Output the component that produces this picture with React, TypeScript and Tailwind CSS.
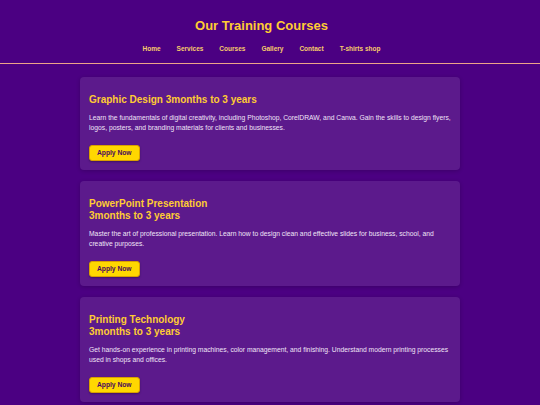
const courses = [
  {
    title: ["Graphic Design 3months to 3 years"],
    text: "Learn the fundamentals of digital creativity, including Photoshop, CorelDRAW, and Canva. Gain the skills to design flyers, logos, posters, and branding materials for clients and businesses.",
  },
  {
    title: ["PowerPoint Presentation", "3months to 3 years"],
    text: "Master the art of professional presentation. Learn how to design clean and effective slides for business, school, and creative purposes.",
  },
  {
    title: ["Printing Technology", "3months to 3 years"],
    text: "Get hands-on experience in printing machines, color management, and finishing. Understand modern printing processes used in shops and offices.",
  },
];

const links = ["Home", "Services", "Courses", "Gallery", "Contact", "T-shirts shop"];

export default function App() {
  return (
    <div className="min-h-[405px] bg-[#4b0082] font-['Liberation_Sans',Arial,sans-serif]">
      {/* header */}
      <header className="border-b border-[#eea488] pt-[17px] pb-[9px] pr-[17px] text-center">
        <h1 className="text-[13px] font-bold leading-[18px] text-[#ffcc33]">Our Training Courses</h1>
        <nav className="mt-[9px] flex justify-center gap-[16px] text-[6.5px] font-bold leading-[10px] text-[#f7cc6a]">
          {links.map((l) => (
            <span key={l}>{l}</span>
          ))}
        </nav>
      </header>

      <main className="mx-auto mt-[13px] flex w-[380px] flex-col gap-[11px]">
        {courses.map((c, i) => (
          <div key={i} className="rounded-[4px] bg-[#5c1a8c] px-[9px] pt-[17px] pb-[8px] shadow-[0_1px_4px_rgba(0,0,0,0.2)]">
            <h2 className="text-[10px] font-bold leading-[12.3px] text-[#ffcc33]">
              {c.title.map((t, j) => (
                <span key={j}>
                  {j > 0 && <br />}
                  {t}
                </span>
              ))}
            </h2>
            <p className="mt-[7px] text-[6.75px] leading-[9.7px] text-[#f0e4f7]">{c.text}</p>
            <button className="mt-[12px] rounded-[3px] border border-[#d9a000] bg-[#ffd700] px-[7px] py-[3px] text-[6.7px] font-bold leading-[8.5px] text-[#4a0a5e] shadow-[0_1px_2px_rgba(0,0,0,0.3)]">
              Apply Now
            </button>
          </div>
        ))}
      </main>
    </div>
  );
}
